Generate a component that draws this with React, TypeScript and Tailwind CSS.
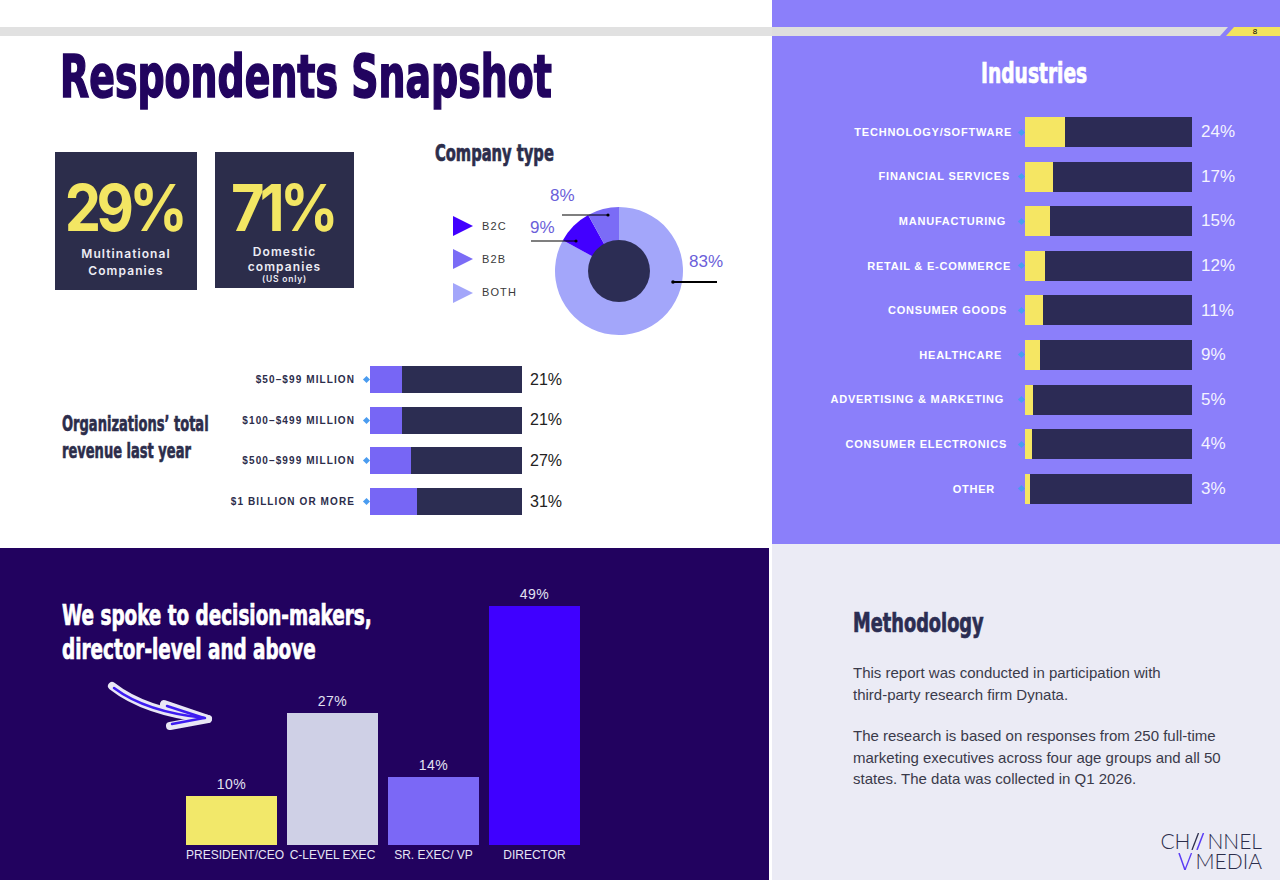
import React from "react";

const display =
  "font-['DejaVu_Sans_Condensed','DejaVu_Sans',sans-serif] font-bold [font-stretch:condensed]";
const arial = "font-['Liberation_Sans',Arial,sans-serif]";

type Row = { label: string; value: number; pr?: number };

const revenue: Row[] = [
  { label: "$50–$99 MILLION", value: 21 },
  { label: "$100–$499 MILLION", value: 21 },
  { label: "$500–$999 MILLION", value: 27 },
  { label: "$1 BILLION OR MORE", value: 31 },
];

const industries: Row[] = [
  { label: "TECHNOLOGY/SOFTWARE", value: 24, pr: 0 },
  { label: "FINANCIAL SERVICES", value: 17, pr: 2 },
  { label: "MANUFACTURING", value: 15, pr: 6 },
  { label: "RETAIL & E-COMMERCE", value: 12, pr: 1 },
  { label: "CONSUMER GOODS", value: 11, pr: 5 },
  { label: "HEALTHCARE", value: 9, pr: 10 },
  { label: "ADVERTISING & MARKETING", value: 5, pr: 8 },
  { label: "CONSUMER ELECTRONICS", value: 4, pr: 5 },
  { label: "OTHER", value: 3, pr: 17 },
];

const levels = [
  { label: "PRESIDENT/CEO", value: 10, color: "bg-[#f2e86a]" },
  { label: "C-LEVEL EXEC", value: 27, color: "bg-[#cfd0e6]" },
  { label: "SR. EXEC/ VP", value: 14, color: "bg-[#7b68f6]" },
  { label: "DIRECTOR", value: 49, color: "bg-[#3f00ff]" },
];

function Diamond() {
  return <div className="w-[5px] h-[5px] rotate-45 bg-[#4a9cf0]" />;
}

function StatCard({ value, children, w, h }: { value: string; children: React.ReactNode; w: string; h: string }) {
  return (
    <div className={`${w} ${h} bg-[#2c2d4b] flex flex-col items-center pt-[24px]`}>
      <div className="font-['Inter',sans-serif] font-bold text-[64px] leading-none tracking-[-0.08em] text-[#f3e663] pr-[4px] scale-x-[0.9]">
        {value}
      </div>
      {children}
    </div>
  );
}

function Donut() {
  return (
    <svg width="210" height="165" viewBox="0 0 210 165" className={arial}>
      <path d="M94,93 L94,29 A64,64 0 1 1 37.92,62.16 Z" fill="#a3a6fa" />
      <path d="M94,93 L37.92,62.16 A64,64 0 0 1 63.16,36.92 Z" fill="#4200ff" />
      <path d="M94,93 L63.16,36.92 A64,64 0 0 1 94,29 Z" fill="#7b6cf6" />
      <circle cx="94" cy="93" r="31" fill="#2c2d54" />
      <text x="25" y="23" fontSize="17" fill="#6b60d9">8%</text>
      <text x="5" y="55" fontSize="17" fill="#6b60d9">9%</text>
      <text x="164" y="89" fontSize="17" fill="#6b60d9">83%</text>
      <line x1="37" y1="37" x2="83" y2="37" stroke="#000" strokeWidth="1.2" />
      <circle cx="83" cy="37" r="1.6" fill="#000" />
      <line x1="6" y1="63" x2="51" y2="63" stroke="#000" strokeWidth="1.2" />
      <circle cx="51" cy="63" r="1.6" fill="#000" />
      <line x1="148" y1="104" x2="192" y2="104" stroke="#000" strokeWidth="1.8" />
      <circle cx="148" cy="104" r="1.8" fill="#000" />
    </svg>
  );
}

function Legend({ color, label }: { color: string; label: string }) {
  return (
    <div className="flex items-center h-[20px]">
      <svg width="20" height="20" viewBox="0 0 20 20">
        <polygon points="0,0 20,10 0,20" fill={color} />
      </svg>
      <span className={`${arial} ml-[9px] text-[11px] tracking-[0.1em] text-[#3a3a3a]`}>{label}</span>
    </div>
  );
}

function Arrow() {
  return (
    <svg width="140" height="70" viewBox="0 0 140 70">
      <g fill="none" strokeLinecap="round" strokeLinejoin="round">
        <path d="M22,16 Q55,42 118,49" stroke="#e9e7f5" strokeWidth="8" />
        <path d="M74,34 L118,49 L80,56" stroke="#e9e7f5" strokeWidth="8" />
        <path d="M24,18 Q56,42 115,48" stroke="#3d1cf0" strokeWidth="2.5" />
        <path d="M77,36 L114,48 L82,54" stroke="#3d1cf0" strokeWidth="2.5" />
      </g>
    </svg>
  );
}

function Logo() {
  const text = "font-['Lato',sans-serif] font-light text-[21px] leading-[19px] text-[#2b2d4b]";
  return (
    <div className="flex flex-col items-end">
      <div className="flex items-end">
        <span className={text}>CH</span>
        <svg width="15" height="17" viewBox="0 0 15 17" className="mx-[1px]">
          <line x1="1" y1="17" x2="7.5" y2="0" stroke="#2b2d4b" strokeWidth="1.3" />
          <line x1="6" y1="17" x2="12.5" y2="0" stroke="#5a3cf5" strokeWidth="1.5" />
        </svg>
        <span className={text}>NNEL</span>
      </div>
      <div className="flex items-end mt-[1px]">
        <svg width="18" height="17" viewBox="0 0 18 17" className="mr-[1px]">
          <line x1="2" y1="0" x2="8" y2="17" stroke="#5a3cf5" strokeWidth="1.5" />
          <line x1="8" y1="17" x2="14.5" y2="0" stroke="#5a3cf5" strokeWidth="1.3" />
        </svg>
        <span className={text}>MEDIA</span>
      </div>
    </div>
  );
}

export default function App() {
  return (
    <div className="w-[1280px] h-[880px] flex bg-white overflow-hidden">
      {/* left column */}
      <div className="w-[772px] flex flex-col">
        <div className="h-[544px] bg-white flex flex-col">
          <div className="mt-[27px] h-[9px] bg-[#e1e1e1]" />
          <h1
            className={`${display} mt-[12px] ml-[60px] text-[58px] leading-none text-[#22045f] [-webkit-text-stroke:1.6px_#22045f] origin-left scale-x-[0.726] whitespace-nowrap`}
          >
            Respondents Snapshot
          </h1>

          <div className="flex h-[234px]">
            <div className="flex gap-[18px] ml-[55px] mt-[46px] items-start">
              <StatCard value="29%" w="w-[142px]" h="h-[138px]">
                <div className="mt-[4.5px] text-center font-['Inter',sans-serif] text-[12px] leading-[17px] font-semibold tracking-[0.09em] text-[#ececf4]">
                  Multinational
                  <br />
                  Companies
                </div>
              </StatCard>
              <StatCard value="71%" w="w-[139px]" h="h-[136px]">
                <div className="mt-[3.5px] text-center font-['Inter',sans-serif] text-[12px] leading-[15px] font-semibold tracking-[0.09em] text-[#ececf4]">
                  Domestic
                  <br />
                  companies
                </div>
                <div className="font-['Inter',sans-serif] text-[8.5px] leading-[11px] font-semibold tracking-[0.09em] text-[#ececf4]">
                  (US only)
                </div>
              </StatCard>
            </div>

            <div className="ml-[81px] mt-[36px] w-[300px]">
              <div
                className={`${display} text-[23px] leading-none text-[#2c2d4b] [-webkit-text-stroke:0.7px_#2c2d4b] origin-left scale-x-[0.71] whitespace-nowrap`}
              >
                Company type
              </div>
              <div className="flex mt-[13px]">
                <div className="w-[90px] pl-[18px] pt-[38px] flex flex-col gap-[13.3px]">
                  <Legend color="#4200ff" label="B2C" />
                  <Legend color="#7b6cf6" label="B2B" />
                  <Legend color="#a3a6fa" label="BOTH" />
                </div>
                <Donut />
              </div>
            </div>
          </div>

          <div className="flex">
            <div
              className={`${display} ml-[62px] mt-[70.5px] w-[143px] text-[21px] leading-[27px] text-[#2c2d4b] [-webkit-text-stroke:0.6px_#2c2d4b] origin-left scale-x-[0.69] whitespace-nowrap`}
            >
              Organizations’ total
              <br />
              revenue last year
            </div>
            <div className="mt-[26px] flex flex-col gap-[13.7px]">
              {revenue.map((r) => (
                <div key={r.label} className="flex items-center">
                  <div
                    className={`${arial} w-[150px] text-right text-[10px] font-bold tracking-[0.11em] text-[#2c2d4b] whitespace-nowrap`}
                  >
                    {r.label}
                  </div>
                  <div className="w-[15px] flex justify-end pr-[1px]">
                    <Diamond />
                  </div>
                  <div className="relative w-[152px] h-[27px] bg-[#2c2d52]">
                    <div className="h-full bg-[#7766f5]" style={{ width: `${(r.value * 152) / 100}px` }} />
                  </div>
                  <div className={`${arial} ml-[8px] text-[16px] text-[#222]`}>{r.value}%</div>
                </div>
              ))}
            </div>
          </div>
        </div>

        <div className="mt-[4px] mr-[3px] h-[332px] bg-[#22025f] grid">
          <div
            className={`${display} [grid-area:1/1] self-start ml-[62px] mt-[51px] text-[28px] leading-[34px] text-white [-webkit-text-stroke:0.7px_#ffffff] origin-left scale-x-[0.73] whitespace-nowrap`}
          >
            We spoke to decision-makers,
            <br />
            director-level and above
          </div>
          <div className="[grid-area:1/1] self-start ml-[90px] mt-[122px]">
            <Arrow />
          </div>
          <div className="[grid-area:1/1] self-end ml-[186px] pb-[18px]">
            <div className="flex items-end gap-[10px]">
              {levels.map((l) => (
                <div key={l.label} className="w-[91px] flex flex-col items-center">
                  <div className={`${arial} text-[14px] leading-[16px] tracking-[0.04em] text-[#e2e2f2] mb-[4px]`}>
                    {l.value}%
                  </div>
                  <div className={`w-full ${l.color}`} style={{ height: `${l.value * 4.88}px` }} />
                </div>
              ))}
            </div>
            <div className="flex gap-[10px] mt-[3px]">
              {levels.map((l) => (
                <div
                  key={l.label}
                  className={`${arial} w-[91px] text-center text-[12px] leading-[14px] text-[#e6e6f5] whitespace-nowrap`}
                >
                  {l.label}
                </div>
              ))}
            </div>
          </div>
        </div>
      </div>

      {/* right column */}
      <div className="w-[508px] flex flex-col">
        <div className="h-[544px] bg-[#8b7ffa] flex flex-col">
          <div className="mt-[27px] h-[9px] flex">
            <div className="w-[456px] h-full bg-[#dedede] [clip-path:polygon(0_0,100%_0,calc(100%-8px)_100%,0_100%)]" />
            <div className="ml-[-2px] w-[54px] h-full bg-[#f3e45f] [clip-path:polygon(8px_0,100%_0,100%_100%,0_100%)] flex items-center justify-center">
              <span className={`${arial} text-[8px] leading-none text-black pl-[4px]`}>8</span>
            </div>
          </div>
          <div
            className={`${display} mt-[24px] text-center text-[28px] leading-none text-white [-webkit-text-stroke:0.7px_#ffffff] scale-x-[0.74] pl-[22px]`}
          >
            Industries
          </div>
          <div className="mt-[29px] flex flex-col gap-[14.6px]">
            {industries.map((r) => (
              <div key={r.label} className="flex items-center">
                <div className="w-[240px] flex justify-end">
                  <div
                    className={`${arial} text-[11px] font-bold tracking-[0.07em] text-white whitespace-nowrap`}
                    style={{ paddingRight: r.pr }}
                  >
                    {r.label}
                  </div>
                </div>
                <div className="w-[13px] flex justify-end pr-[1px]">
                  <Diamond />
                </div>
                <div className="relative w-[167px] h-[30px] bg-[#2c2b55]">
                  <div className="h-full bg-[#f5e663]" style={{ width: `${(r.value * 167) / 100}px` }} />
                </div>
                <div className={`${arial} ml-[9px] text-[17px] text-[#f4f3ff]`}>{r.value}%</div>
              </div>
            ))}
          </div>
        </div>

        <div className="h-[336px] bg-[#ebebf5] flex flex-col">
          <div
            className={`${display} ml-[81px] mt-[66px] text-[26px] leading-none text-[#2b2d52] [-webkit-text-stroke:0.7px_#2b2d52] origin-left scale-x-[0.76] whitespace-nowrap`}
          >
            Methodology
          </div>
          <p className={`${arial} ml-[81px] mt-[26px] text-[15px] leading-[21.5px] text-[#3a3a4a]`}>
            This report was conducted in participation with
            <br />
            third-party research firm Dynata.
          </p>
          <p className={`${arial} ml-[81px] mt-[20px] text-[15px] leading-[21.5px] text-[#3a3a4a]`}>
            The research is based on responses from 250 full-time
            <br />
            marketing executives across four age groups and all 50
            <br />
            states. The data was collected in Q1 2026.
          </p>
          <div className="mt-auto self-end mr-[18px] mb-[10px]">
            <Logo />
          </div>
        </div>
      </div>
    </div>
  );
}
